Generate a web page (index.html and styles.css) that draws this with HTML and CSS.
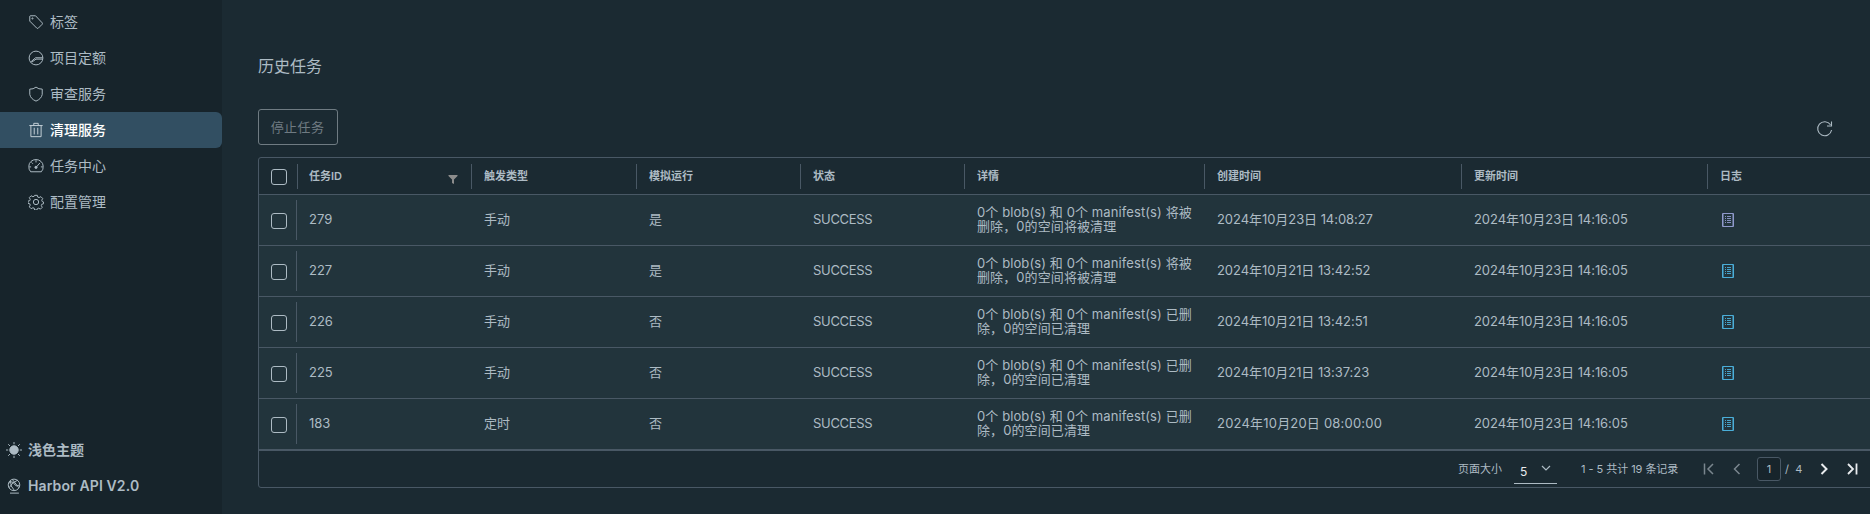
FILE: index.html
```html
<!DOCTYPE html>
<html lang="zh-CN">
<head>
<meta charset="utf-8">
<title>Harbor</title>
<link rel="stylesheet" href="styles.css">
</head>
<body>
<svg class="defs" width="0" height="0">
  <symbol id="log" viewBox="0 0 12 14"><path d="M.5 .5h11v13H.5z"/><path d="M1.500 1v12M10.500 1v12" opacity=".5"/><path d="M3 3.500h1M3 5.500h1M3 7.500h1M3 9.500h1M5 3.500h4M5 5.500h4M5 7.500h4M5 9.500h4" opacity=".9"/></symbol>
</svg>
<div class="app">
  <nav class="sidebar">
    <div class="nav-main">
      <a class="nav-item"><svg class="icon" viewBox="0 0 36 36"><path d="M4 5v11l16 16q2 1 3 0l9-9q1-1 0-3L17 4H6q-2 0-2 1z"/><circle cx="10" cy="10" r="1.3"/></svg>标签</a>
      <a class="nav-item"><svg class="icon" viewBox="0 0 36 36"><circle cx="18" cy="18" r="15.5"/><path d="M6 27l11-9.500h16M9 27l9-6.500h14"/></svg>项目定额</a>
      <a class="nav-item"><svg class="icon" viewBox="0 0 36 36"><path d="M18 2.500q6 5 14 4.500v12q-2 10-14 15q-12-5-14-15V7q8 .5 14-4.500z"/></svg>审查服务</a>
      <a class="nav-item active"><svg class="icon" viewBox="0 0 36 36"><path d="M3 8h30M6.500 8v25h23V8M13 8V3h10v5M14 13v15M22 13v15"/></svg>清理服务</a>
      <a class="nav-item"><svg class="icon" viewBox="0 0 36 36"><path d="M6 31h24q5-5 4-13a16 14.500 0 0 0-32 0q-1 8 4 13zM18 5v5M3 20h4M29 20h4M8 10l3 3M19 20l8-9"/><circle cx="18" cy="21" r="2.500" fill="currentColor"/></svg>任务中心</a>
      <a class="nav-item"><svg class="icon" viewBox="0 0 36 36"><circle cx="18" cy="18" r="6"/><path d="M15 3h6l1 4 3 1 4-2 4 4-2 4 1 3 3 1v4l-4 1-1 3 2 4-4 4-4-2-3 1-1 3h-5l-1-4-3-1-4 2-4-4 2-4-1-3-4-1v-5l4-1 1-3-2-4 4-4 4 2 3-1z"/></svg>配置管理</a>
    </div>
    <div class="nav-foot">
      <a class="nav-item"><svg class="icon" viewBox="0 0 36 36"><circle cx="18" cy="18" r="9.500" fill="currentColor"/><path d="M18 0v5M18 31v5M0 18h5M31 18h5M5 5l4 4M27 27l4 4M31 5l-4 4M5 31l4-4"/></svg>浅色主题</a>
      <a class="nav-item api"><svg class="icon" viewBox="0 0 36 36"><circle cx="18" cy="15.500" r="13"/><path d="M9 34h20M6 12q8-7 12 1t12 3M10 6q-1 13 9 22M26 5q-12 4-19 17M14 3l15 19"/></svg>Harbor API V2.0</a>
    </div>
  </nav>
  <main class="content">
    <h2 class="title">历史任务</h2>
    <div class="toolbar">
      <button class="stop" disabled>停止任务</button>
      <svg class="refresh" viewBox="0 0 18 18"><path d="M15.600 10A7 7 0 1 1 14.500 4.800M15.500 1.500v4.500H11"/></svg>
    </div>
    <section class="grid">
      <div class="row head">
        <div class="cell check"><i class="box"></i></div>
        <div class="cell id">任务ID<svg class="filter" viewBox="0 0 10 9"><path d="M.5 0h9v1L6 4.500V9L4 8V4.500L.5 1z"/></svg></div>
        <div class="cell">触发类型</div><div class="cell">模拟运行</div><div class="cell">状态</div><div class="cell">详情</div><div class="cell">创建时间</div><div class="cell">更新时间</div><div class="cell">日志</div>
      </div>
      <div class="row">
        <div class="cell check"><i class="box"></i></div><div class="cell id">279</div><div class="cell">手动</div><div class="cell">是</div><div class="cell caps">SUCCESS</div>
        <div class="cell detail">0个 blob(s) 和 0个 manifest(s) 将被<br>删除，0的空间将被清理</div>
        <div class="cell date">2024年10月23日 14:08:27</div><div class="cell date">2024年10月23日 14:16:05</div><div class="cell"><svg class="log visited"><use href="#log"/></svg></div>
      </div>
      <div class="row">
        <div class="cell check"><i class="box"></i></div><div class="cell id">227</div><div class="cell">手动</div><div class="cell">是</div><div class="cell caps">SUCCESS</div>
        <div class="cell detail">0个 blob(s) 和 0个 manifest(s) 将被<br>删除，0的空间将被清理</div>
        <div class="cell date">2024年10月21日 13:42:52</div><div class="cell date">2024年10月23日 14:16:05</div><div class="cell"><svg class="log"><use href="#log"/></svg></div>
      </div>
      <div class="row">
        <div class="cell check"><i class="box"></i></div><div class="cell id">226</div><div class="cell">手动</div><div class="cell">否</div><div class="cell caps">SUCCESS</div>
        <div class="cell detail">0个 blob(s) 和 0个 manifest(s) 已删<br>除，0的空间已清理</div>
        <div class="cell date">2024年10月21日 13:42:51</div><div class="cell date">2024年10月23日 14:16:05</div><div class="cell"><svg class="log"><use href="#log"/></svg></div>
      </div>
      <div class="row">
        <div class="cell check"><i class="box"></i></div><div class="cell id">225</div><div class="cell">手动</div><div class="cell">否</div><div class="cell caps">SUCCESS</div>
        <div class="cell detail">0个 blob(s) 和 0个 manifest(s) 已删<br>除，0的空间已清理</div>
        <div class="cell date">2024年10月21日 13:37:23</div><div class="cell date">2024年10月23日 14:16:05</div><div class="cell"><svg class="log"><use href="#log"/></svg></div>
      </div>
      <div class="row">
        <div class="cell check"><i class="box"></i></div><div class="cell id">183</div><div class="cell">定时</div><div class="cell">否</div><div class="cell caps">SUCCESS</div>
        <div class="cell detail">0个 blob(s) 和 0个 manifest(s) 已删<br>除，0的空间已清理</div>
        <div class="cell date wide">2024年10月20日 08:00:00</div><div class="cell date">2024年10月23日 14:16:05</div><div class="cell"><svg class="log"><use href="#log"/></svg></div>
      </div>
      <footer class="pager">
        <span class="size-label">页面大小</span>
        <span class="size">5<svg viewBox="0 0 10 6"><path d="M1 1l4 4 4-4"/></svg></span>
        <span class="range">1 - 5 共计 19 条记录</span>
        <svg class="nav first" viewBox="0 0 12 12"><path d="M1.500 .5v11M10 1L5 6l5 5"/></svg>
        <svg class="nav prev" viewBox="0 0 12 12"><path d="M8.500 1l-5 5 5 5"/></svg>
        <span class="page">1</span><span class="total">/&nbsp; 4</span>
        <svg class="nav next" viewBox="0 0 12 12"><path d="M3.500 1l5 5-5 5"/></svg>
        <svg class="nav last" viewBox="0 0 12 12"><path d="M10.500 .5v11M2 1l5 5-5 5"/></svg>
      </footer>
    </section>
  </main>
</div>
</body>
</html>
```
FILE: styles.css
```css
* { box-sizing: border-box; }
body {
  margin: 0;
  background: #1b2a32;
  color: #adbbc4;
  font: 13px/14px Inter, "Noto Sans CJK SC", sans-serif;
  overflow: hidden;
}
svg { fill: none; stroke: currentColor; flex: none; }
.defs { display: block; }
.app { display: flex; height: 514px; }
.sidebar {
  width: 222px;
  flex: none;
  background: #17242b;
  display: flex;
  flex-direction: column;
  justify-content: space-between;
  padding: 4px 0 10px;
  font-size: 14px;
}
.nav-item { display: flex; align-items: center; height: 36px; gap: 6px; padding-left: 28px; }
.nav-item .icon { width: 16px; height: 16px; stroke-width: 2.2; }
.nav-item.active { background: #324f62; color: #fff; font-weight: 500; border-radius: 0 6px 6px 0; }
.nav-item.active .icon { color: #c6d1d8; }
.nav-foot .nav-item { padding-left: 6px; font-weight: 600; }
.nav-foot .api { letter-spacing: .12px; }
.content { flex: none; width: 1648px; padding: 54px 0 0 36px; overflow: hidden; }
.title { margin: 0; font-size: 16px; line-height: 24px; font-weight: 400; }
.toolbar { display: flex; justify-content: space-between; align-items: flex-start; margin-top: 31px; padding-right: 36px; }
.stop {
  width: 80px; height: 36px;
  padding: 0 1px 0 0;
  border: 1px solid #6f7b82;
  border-radius: 3px;
  background: none;
  color: #6f7b82;
  font: inherit;
  letter-spacing: .4px;
}
.refresh { width: 18px; height: 18px; margin-top: 11px; stroke-width: 1.1; }
.grid { margin-top: 12px; width: 1640px; border: 1px solid #495865; border-radius: 3px; }
.row {
  display: grid;
  grid-template-columns: 38px 174px 165px 164px 164px 240px 257px 246px 1fr;
  height: 51px;
  background: #22343c;
  border-bottom: 1px solid #495865;
}
.row.head { height: 37px; background: none; font-size: 11px; font-weight: 600; }
.cell { display: flex; align-items: center; padding: 0 0 2px 13px; white-space: nowrap; }
.cell.id { padding-left: 12px; }
.head .cell { margin: 6px 0 5px; border-left: 1px solid #495865; padding: 0 0 1px 12px; }
.head .cell.id { padding-left: 11px; }
.head .check { border: 0; padding: 0 0 0 12px; }
.row:not(.head) .check { margin: 5px 0 5px 0; border-right: 1px solid #495865; padding: 2px 0 0 12px; }
.box { width: 16px; height: 16px; border: 1px solid #adbbc4; border-radius: 3px; flex: none; }
.caps { letter-spacing: -.3px; }
.detail { letter-spacing: .1px; }
.date { letter-spacing: -.06px; }
.date.wide { letter-spacing: .2px; }
.filter { width: 10px; height: 9px; margin: 6px 13px 0 auto; fill: #8c8c8c; stroke: none; }
.log { width: 12px; height: 14px; color: #4aaed9; margin: 2px 0 0 2px; }
.log.visited { color: #8f99cc; }
.pager {
  display: flex;
  align-items: center;
  height: 37px;
  border-top: 1px solid #495865;
  padding-left: 1199px;
  font-size: 11px;
  white-space: nowrap;
}
.size { display: flex; align-items: center; justify-content: space-between; width: 43px; height: 23px; margin: 6px 0 0 12px; padding: 0 6px; border-bottom: 1px solid #adbbc4; color: #e9ecef; font-size: 12px; }
.size svg { width: 10px; height: 6px; margin-bottom: 7px; color: #adbbc4; stroke-width: 1.2; }
.range { width: 97px; margin-left: 24px; letter-spacing: -.05px; }
.nav { width: 12px; height: 12px; stroke-width: 1.5; }
.first { margin-left: 25px; color: #7a868e; }
.prev { margin-left: 16px; color: #7a868e; }
.page { width: 24px; height: 24px; margin-left: 14px; border: 1px solid #495865; border-radius: 3px; background: #17242b; text-align: center; line-height: 22px; }
.total { width: 18px; margin-left: 4px; }
.next { margin-left: 15px; color: #e9ecef; stroke-width: 2; }
.last { margin-left: 16px; color: #e9ecef; stroke-width: 1.8; }
```
